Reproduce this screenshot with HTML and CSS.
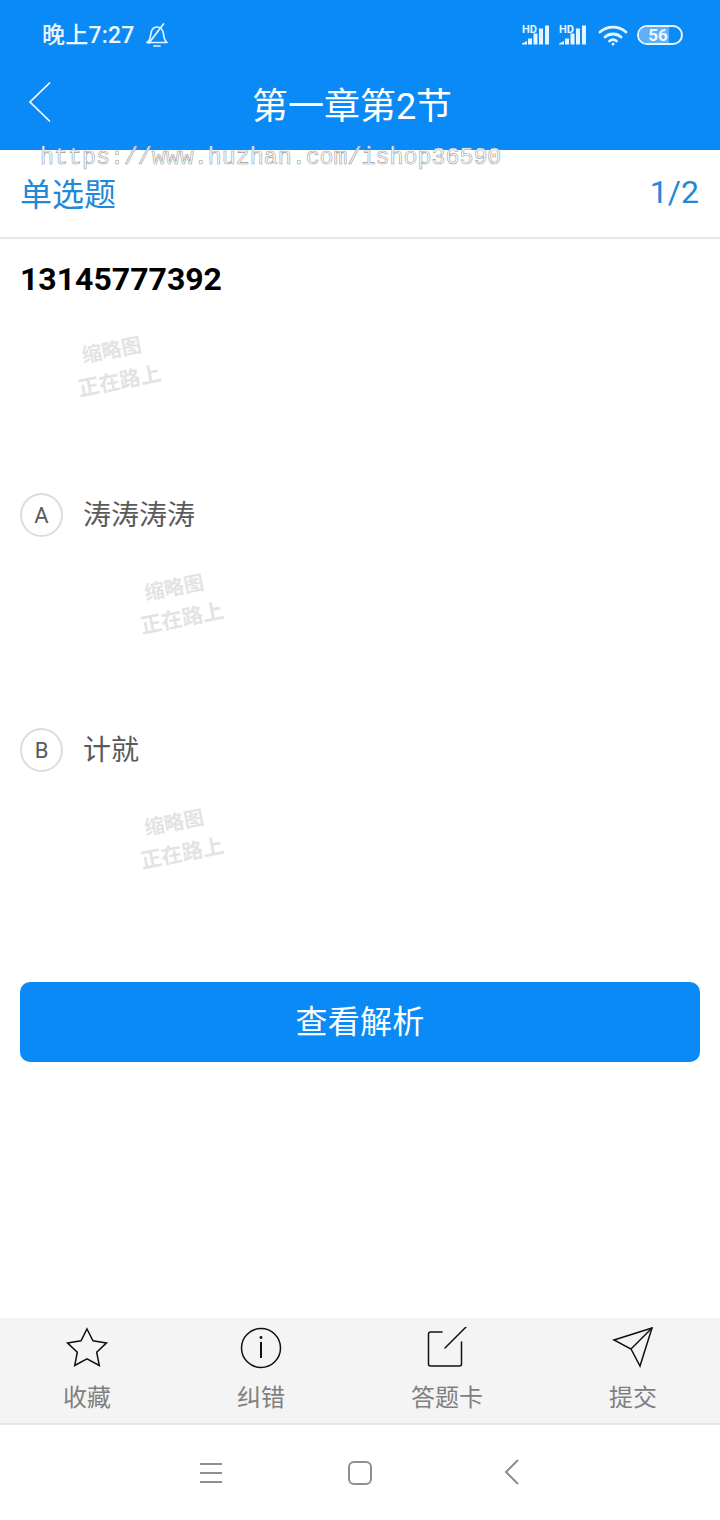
FILE: index.html
```html
<!DOCTYPE html>
<html lang="zh">
<head>
<meta charset="utf-8">
<title>第一章第2节</title>
<link rel="stylesheet" href="styles.css">
</head>
<body>
<div class="app">
  <header class="header">
    <div class="status">
      <div class="status-left">
        <span class="time">晚上7:27</span>
        <svg class="bell" width="24" height="24" viewBox="0 0 24 24" fill="none" stroke="#e8f4ff" stroke-width="1.700" stroke-linejoin="round" stroke-linecap="round"><path d="M2 19.500c2.500-1.500 3.200-3.500 3.500-7C6 7 8.500 4 12 4s6 3 6.500 7c.4 4 1.500 7 3.500 8.500z"/><path d="M9 23h6"/><path d="M18.500 1 4 20"/></svg>
      </div>
      <div class="status-right">
        <svg class="signal" width="29" height="22" viewBox="0 0 29 22"><text x="0" y="9.500" class="hd">HD</text><g fill="#e8f4ff"><path d="M0 21.500v-1l5-2.500v3.500z"/><rect x="6" y="15.500" width="4" height="6"/><rect x="11.500" y="10.500" width="4" height="11"/><rect x="17" y="5.500" width="4" height="16"/><rect x="23" y="2.500" width="4" height="19"/></g></svg>
        <svg class="signal" width="29" height="22" viewBox="0 0 29 22"><text x="0" y="9.500" class="hd">HD</text><g fill="#e8f4ff"><path d="M0 21.500v-1l5-2.500v3.500z"/><rect x="6" y="15.500" width="4" height="6"/><rect x="11.500" y="10.500" width="4" height="11"/><rect x="17" y="5.500" width="4" height="16"/><rect x="23" y="2.500" width="4" height="19"/></g></svg>
        <svg class="wifi" width="30" height="22" viewBox="0 0 30 22" fill="none" stroke="#e8f4ff" stroke-width="2.800" stroke-linecap="round"><path d="M2 8c7.500-6.500 18.500-6.500 26 0"/><path d="M7 13c4.500-4 11.500-4 16 0"/><path d="M11.500 17c2-1.500 5-1.500 7 0"/><circle cx="15" cy="20" r="1.500" fill="#e8f4ff" stroke="none"/></svg>
        <div class="battery"><div class="battery-fill"></div><span class="battery-num">56</span></div>
      </div>
    </div>
    <div class="titlebar">
      <svg class="back" width="24" height="42" viewBox="0 0 24 42" fill="none" stroke="#fff" stroke-width="1.700"><path d="M22 1.500 2 21l20 19.500"/></svg>
      <h1 class="title">第一章第2节</h1>
    </div>
  </header>

  <main class="content">
    <div class="url-mark">https://www.huzhan.com/ishop36590</div>
    <div class="type-row">
      <span class="type">单选题</span>
      <span class="count">1/2</span>
    </div>
    <div class="question">
      <div class="q-text">13145777392</div>
      <div class="thumb thumb-q"><span>缩略图</span><span>正在路上</span></div>
    </div>
    <div class="option">
      <div class="opt-row"><span class="letter">A</span><span class="opt-text">涛涛涛涛</span></div>
      <div class="thumb thumb-o"><span>缩略图</span><span>正在路上</span></div>
    </div>
    <div class="option">
      <div class="opt-row"><span class="letter">B</span><span class="opt-text">计就</span></div>
      <div class="thumb thumb-o"><span>缩略图</span><span>正在路上</span></div>
    </div>
    <button class="analysis">查看解析</button>
  </main>

  <nav class="toolbar">
    <div class="tool tool-1">
      <svg width="44" height="42" viewBox="0 0 44 42" fill="none" stroke="#111" stroke-width="1.500" stroke-linejoin="miter"><path d="M22 2l6 11.800 13.500 2.100-9.800 9.300 2.600 13.300L22 31.800 9.700 38.500l2.600-13.300-9.800-9.300L16 13.800z"/></svg>
      <span>收藏</span>
    </div>
    <div class="tool tool-2">
      <svg width="44" height="42" viewBox="0 0 44 42" fill="none" stroke="#111" stroke-width="1.500"><circle cx="22" cy="21" r="19.500"/><circle cx="22" cy="10.500" r="1.400" fill="#111" stroke="none"/><path d="M22 15V31" stroke-width="2"/></svg>
      <span>纠错</span>
    </div>
    <div class="tool tool-3">
      <svg width="44" height="42" viewBox="0 0 44 42" fill="none" stroke="#111" stroke-width="1.500" stroke-linecap="round"><path d="M17 5H5.500a2 2 0 0 0-2 2v30a2 2 0 0 0 2 2h29a2 2 0 0 0 2-2V15"/><path d="M20 21 41 0"/></svg>
      <span>答题卡</span>
    </div>
    <div class="tool tool-4">
      <svg width="44" height="42" viewBox="0 0 44 42" fill="none" stroke="#111" stroke-width="1.500" stroke-linejoin="miter"><path d="M41 1 3 13l17 9 9 17z"/><path d="M41 1 20 22"/></svg>
      <span>提交</span>
    </div>
  </nav>

  <footer class="navbar">
    <svg class="nav-menu" width="24" height="22" viewBox="0 0 24 22" stroke="#8e8e8e" stroke-width="2"><path d="M1 2h22M1 11h22M1 20h22"/></svg>
    <svg class="nav-home" width="26" height="26" viewBox="0 0 26 26" fill="none" stroke="#8e8e8e" stroke-width="2"><rect x="2" y="2" width="22" height="22" rx="5"/></svg>
    <svg class="nav-back" width="16" height="26" viewBox="0 0 16 26" fill="none" stroke="#8e8e8e" stroke-width="2"><path d="M14 1 2 13l12 12"/></svg>
  </footer>
</div>
</body>
</html>
```
FILE: styles.css
```css
* { box-sizing: border-box; margin: 0; padding: 0; }
html, body { width: 720px; height: 1520px; overflow: hidden; background: #fff; }
body { font-family: Roboto, "Noto Sans CJK SC", sans-serif; }
.app { width: 720px; height: 1520px; display: flex; flex-direction: column; }

.header { height: 150px; background: #0a8af6; color: #fff; flex: none; }
.status { height: 70px; display: flex; justify-content: space-between; align-items: center; padding: 0 37px 0 42px; }
.status-left { display: flex; align-items: center; gap: 11px; }
.time { font-size: 23px; font-weight: 500; color: #eef7ff; letter-spacing: .2px; margin-top: -4px; }
.bell { margin-top: -1px; }
.status-right { display: flex; align-items: center; }
.signal { margin-right: 8px; margin-top: -3px; }
.hd { font: 700 11px Roboto, sans-serif; fill: #e8f4ff; }
.wifi { margin: 0 9px 0 2px; }
.battery { position: relative; width: 46px; height: 20px; border: 2px solid #e8f4ff; border-radius: 10px; overflow: hidden; display: flex; align-items: center; justify-content: center; }
.battery-fill { position: absolute; left: 0; top: 0; bottom: 0; width: 30px; background: #5fb0f8; }
.battery-num { position: relative; font-size: 17px; font-weight: 700; color: #eef7ff; padding-right: 4px; }
.titlebar { height: 70px; position: relative; display: flex; align-items: center; justify-content: center; padding: 0 16px 0 0; }
.back { position: absolute; left: 28px; top: 11px; }
.title { font-size: 36px; font-weight: 400; padding-left: 0; margin-top: -5px; }

.content { position: relative; flex: 1; padding: 0 20px; min-height: 0; }
.url-mark { position: absolute; left: 40px; top: -6px; font-family: "Liberation Mono", monospace; font-size: 23.300px; line-height: 28px; color: #fff; -webkit-text-stroke: .6px #9c9c9c; white-space: nowrap; }
.type-row { height: 89px; margin: 0 -20px; padding: 0 21px 4px 20px; border-bottom: 2px solid #e8e8e8; display: flex; justify-content: space-between; align-items: center; color: #2288d8; font-size: 32px; }
.q-text { font-size: 32px; font-weight: 700; color: #000; height: 80px; line-height: 80px; padding-left: 0; }
.thumb { display: flex; flex-direction: column; color: #e3e3e3; font-weight: 700; transform: rotate(-11deg); width: 90px; align-items: flex-start; }
.thumb span { white-space: nowrap; }
.thumb span:first-child { font-size: 20px; line-height: 30px; margin-left: 10px; }
.thumb span:last-child { font-size: 21px; line-height: 34px; }
.thumb-q { height: 174px; margin-left: 51px; padding-top: 24px; transform-origin: 0 32px; }
.option { height: 235px; }
.opt-row { display: flex; align-items: center; height: 44px; }
.letter { width: 43px; height: 44px; border: 2px solid #dcdcdc; border-radius: 50%; display: flex; align-items: center; justify-content: center; font-size: 22px; color: #5a5a5a; }
.opt-text { font-size: 28px; color: #5a5a5a; margin-left: 20px; padding-bottom: 4px; }
.thumb-o { margin-left: 118px; margin-top: 43px; transform-origin: 0 32px; }
.analysis { display: block; width: 680px; height: 80px; margin-top: 19px; padding-bottom: 7px; border: 0; border-radius: 10px; background: #0a8af6; color: #fff; font: 400 32px Roboto, "Noto Sans CJK SC", sans-serif; letter-spacing: .2px; }

.toolbar { position: relative; flex: none; height: 107px; background: #f4f4f4; border-bottom: 2px solid #e6e6e6; }
.tool { position: absolute; top: 9px; display: flex; flex-direction: column; align-items: center; width: 120px; color: #808080; font-size: 24px; }
.tool span { line-height: 34px; margin-top: 12px; }
.tool-1 { left: 27px; }
.tool-2 { left: 201px; }
.tool-3 { left: 387px; }
.tool-4 { left: 573px; }

.navbar { flex: none; height: 95px; position: relative; }
.navbar svg { position: absolute; }
.nav-menu { left: 199px; top: 37px; }
.nav-home { left: 347px; top: 35px; }
.nav-back { left: 504px; top: 34px; }
```
